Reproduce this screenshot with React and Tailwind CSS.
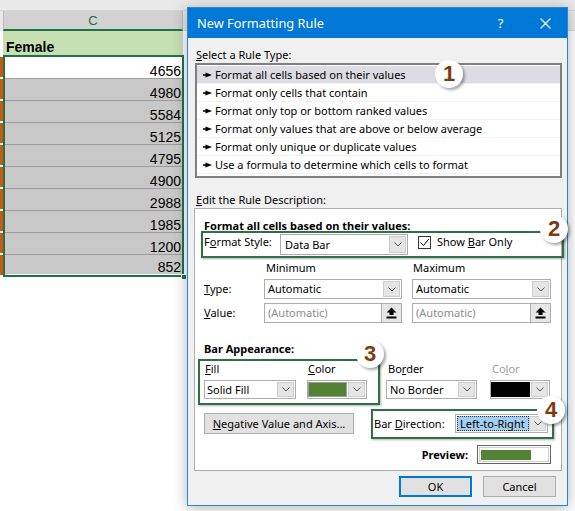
import React from "react";

const Chevron = () => (
  <svg width="8" height="5" viewBox="0 0 8 5">
    <polyline points="0.5,0.5 4,4 7.5,0.5" fill="none" stroke="#555" strokeWidth="1" />
  </svg>
);

const DropBtn = () => (
  <div className="w-[17px] my-[1px] mr-[1px] ml-auto shrink-0 flex items-center justify-center bg-[#e5e5e5] border border-[#cdcdcd]">
    <Chevron />
  </div>
);

function Combo({ cls, text, textCls }) {
  return (
    <div className={"flex items-stretch bg-white border border-[#adadad] " + cls}>
      <div className={"flex items-center leading-[16px] " + textCls}>{text}</div>
      <DropBtn />
    </div>
  );
}

const UpArrow = () => (
  <svg width="11" height="12" viewBox="0 0 11 12">
    <path d="M5.5 0.5 L10.5 5.5 H7.5 V8 H3.5 V5.5 H0.5 Z" fill="#000" />
    <rect x="0.5" y="9.5" width="10" height="2" fill="#000" />
  </svg>
);

function RefInput({ cls }) {
  return (
    <div className={"flex items-stretch bg-white border border-[#adadad] " + cls}>
      <div className="flex items-center pl-[3px] text-[#8c8c8c] leading-[16px]">(Automatic)</div>
      <div className="ml-auto w-[20px] shrink-0 flex items-center justify-center bg-[#e6e6e6] border-l border-[#adadad]">
        <UpArrow />
      </div>
    </div>
  );
}

const ListArrow = () => (
  <svg width="9" height="6" viewBox="0 0 9 6" className="shrink-0">
    <path d="M0 2.3 H2.5 V0.5 L9 3 L2.5 5.5 V3.7 H0 Z" fill="#000" />
  </svg>
);

const ruleTypes = [
  "Format all cells based on their values",
  "Format only cells that contain",
  "Format only top or bottom ranked values",
  "Format only values that are above or below average",
  "Format only unique or duplicate values",
  "Use a formula to determine which cells to format",
];

const values = ["4656", "4980", "5584", "5125", "4795", "4900", "2988", "1985", "1200", "852"];

function Badge({ cls, n }) {
  return (
    <div
      className={
        "absolute w-[28px] h-[28px] rounded-full bg-white flex items-center justify-center shadow-[2px_2px_3px_rgba(0,0,0,0.35)] font-['Liberation_Sans',Arial,sans-serif] font-bold text-[22px] leading-none text-[#7f3b0e] " +
        cls
      }
    >
      {n}
    </div>
  );
}

function Sheet() {
  return (
    <div className="flex flex-col font-['Liberation_Sans',Arial,sans-serif] text-[14px] text-black">
      <div className="h-[11px] bg-[#e9e9e9] border-b border-[#d6d6d6]" />
      <div className="flex h-[20px]">
        <div className="w-[3px] bg-[#e9e9e9]" />
        <div className="w-[180px] bg-[#d2d2d2] border-l border-r border-[#bdbdbd] border-b-2 border-b-[#217346] flex items-center justify-center text-[13px] text-[#2a6a44] leading-none">
          C
        </div>
        <div className="flex-1 bg-[#e9e9e9] border-b border-[#d6d6d6]" />
      </div>
      <div className="flex h-[24px]">
        <div className="w-[3px] bg-white" />
        <div className="w-[180px] bg-[#c6e0b4] border-r border-[#d4d4d4] flex items-end pl-[3px] pb-[1px] font-bold leading-[14px]">
          Female
        </div>
      </div>
      <div className="flex">
        <div className="w-[3px] flex flex-col pt-[2px]">
          {values.map((v, i) => (
            <div key={i} className="h-[22px] pb-[2px]">
              <div className="h-full bg-[#c55a11]" />
            </div>
          ))}
        </div>
        <div className="relative w-[181px] border-2 border-[#217346]">
          <div className="flex flex-col border-b border-white">
            {values.map((v, i) => (
              <div
                key={i}
                className={
                  "flex items-end justify-end pr-[1px] leading-[14px] " +
                  (i === 0 ? "bg-white " : "bg-[#c8c8c8] ") +
                  (i === values.length - 1 ? "h-[19px]" : "h-[22px] border-b border-[#9b9b9b]")
                }
              >
                {v}
              </div>
            ))}
          </div>
          <div className="absolute right-[-5px] bottom-[-5px] w-[6px] h-[6px] bg-[#217346] border border-white" />
        </div>
      </div>
    </div>
  );
}

function Dialog() {
  return (
    <div className="absolute left-[187px] top-[7px] w-[381px] h-[499px] border border-[#2b85d6] bg-[#f0f0f0] flex flex-col shadow-[0_2px_14px_rgba(0,0,0,0.3)] font-['Noto_Sans',sans-serif] text-[11px] text-black">
      <div className="h-[30px] shrink-0 bg-[#0078d7] flex items-center text-white">
        <div className="pl-[9px] text-[12.8px] leading-[16px]">New Formatting Rule</div>
        <div className="ml-auto w-[45px] flex justify-center text-[13px] leading-[16px]">?</div>
        <div className="w-[44px] flex justify-center">
          <svg width="11" height="11" viewBox="0 0 11 11">
            <path d="M0.5 0.5 L10.5 10.5 M10.5 0.5 L0.5 10.5" stroke="#fff" strokeWidth="1.1" />
          </svg>
        </div>
      </div>
      <div className="pl-[7px] pt-[9px] flex flex-col">
        <div className="pl-[1px] h-[16px] leading-[16px]">
          <span className="underline">S</span>elect a Rule Type:
        </div>
        <div className="w-[367px] h-[115px] border-2 border-[#7f7f7f] bg-white pt-[1px] flex flex-col">
          {ruleTypes.map((t, i) => (
            <div
              key={i}
              className={
                "h-[18px] shrink-0 flex items-center gap-[3px] pl-[6px] leading-[16px] border-b border-[#f2f2f2] " +
                (i === 0 ? "bg-[#dcdce2]" : "")
              }
            >
              <ListArrow />
              <span className="pt-[1px]">{t}</span>
            </div>
          ))}
        </div>
        <div className="mt-[14px] pl-[1px] h-[16px] leading-[16px]">
          <span className="underline">E</span>dit the Rule Description:
        </div>
        <div className="ml-[-1px] w-[368px] h-[263px] border border-[#adadad] bg-white pl-[9px] pt-[9px] flex flex-col">
          <div className="h-[16px] leading-[16px] font-bold">Format all cells based on their values:</div>
          <div className="flex items-start h-[21px]">
            <div className="w-[76px] leading-[16px]">
              F<span className="underline">o</span>rmat Style:
            </div>
            <Combo cls="w-[128px] h-[21px]" text="Data Bar" textCls="pl-[4px]" />
            <div className="ml-[10px] mt-[2px] w-[13px] h-[13px] border border-[#333] bg-white flex items-center justify-center">
              <svg width="11" height="11" viewBox="0 0 11 11">
                <path d="M1.5 5.5 L4.5 8.5 L9.8 2" fill="none" stroke="#000" strokeWidth="1" />
              </svg>
            </div>
            <div className="ml-[6px] leading-[16px]">
              Show <span className="underline">B</span>ar Only
            </div>
          </div>
          <div className="flex mt-[5px] h-[16px] leading-[16px]">
            <div className="w-[209px] pl-[62px]">Minimum</div>
            <div>Maximum</div>
          </div>
          <div className="flex items-center mt-[3px] h-[20px]">
            <div className="w-[60px] leading-[16px]">
              <span className="underline">T</span>ype:
            </div>
            <Combo cls="w-[138px] h-[20px]" text="Automatic" textCls="pl-[3px]" />
            <Combo cls="ml-[10px] w-[139px] h-[20px]" text="Automatic" textCls="pl-[3px]" />
          </div>
          <div className="flex items-center mt-[4px] h-[20px]">
            <div className="w-[60px] leading-[16px]">
              <span className="underline">V</span>alue:
            </div>
            <RefInput cls="w-[138px] h-[20px]" />
            <RefInput cls="ml-[10px] w-[139px] h-[20px]" />
          </div>
          <div className="mt-[18px] h-[16px] leading-[16px] font-bold">Bar Appearance:</div>
          <div className="flex mt-[4px]">
            <div className="w-[92px] flex flex-col">
              <div className="pl-[1px] h-[16px] leading-[16px]">
                <span className="underline">F</span>ill
              </div>
              <Combo cls="mt-[3px] w-[92px] h-[19px]" text="Solid Fill" textCls="pl-[2px]" />
            </div>
            <div className="ml-[11px] w-[60px] flex flex-col">
              <div className="pl-[1px] h-[16px] leading-[16px]">
                <span className="underline">C</span>olor
              </div>
              <div className="mt-[3px] w-[60px] h-[19px] flex items-stretch bg-white border border-[#adadad]">
                <div className="w-[39px] my-[1px] bg-[#548235] border border-[#9a9a9a]" />
                <DropBtn />
              </div>
            </div>
            <div className="ml-[19px] w-[91px] flex flex-col">
              <div className="pl-[2px] h-[16px] leading-[16px]">
                Bo<span className="underline">r</span>der
              </div>
              <Combo cls="mt-[3px] w-[91px] h-[19px]" text="No Border" textCls="pl-[3px]" />
            </div>
            <div className="ml-[13px] w-[60px] flex flex-col">
              <div className="pl-[2px] h-[16px] leading-[16px] text-[#a0a0a0]">
                Co<span className="underline">l</span>or
              </div>
              <div className="mt-[3px] w-[60px] h-[19px] flex items-stretch bg-white border border-[#adadad]">
                <div className="w-[39px] my-[1px] bg-black" />
                <DropBtn />
              </div>
            </div>
          </div>
          <div className="flex items-center mt-[14px] h-[21px]">
            <div className="w-[150px] h-[21px] bg-[#e1e1e1] border border-[#adadad] flex items-center justify-center leading-[16px]">
              <span>
                <span className="underline">N</span>egative Value and Axis...
              </span>
            </div>
            <div className="ml-[20px] w-[81px] leading-[16px]">
              Bar <span className="underline">D</span>irection:
            </div>
            <div className="w-[93px] h-[19px] flex items-stretch bg-white border border-[#adadad]">
              <div className="ml-[1px] my-[1px] w-[75px] bg-[#a3cff3] border border-dotted border-[#333] flex items-center pl-[2px] leading-[16px]">
                Left-to-Right
              </div>
              <DropBtn />
            </div>
          </div>
          <div className="flex items-center justify-end mt-[11px] pr-[10px] h-[19px]">
            <div className="font-bold leading-[16px]">Preview:</div>
            <div className="ml-[9px] w-[74px] h-[19px] border border-[#646464] bg-white p-[1px]">
              <div className="w-full h-full border border-[#d0d0d0] flex items-center pl-[1px]">
                <div className="w-[50px] h-[10px] bg-[#548235]" />
              </div>
            </div>
          </div>
        </div>
        <div className="w-[367px] flex justify-end gap-[11px] pr-[6px] mt-[5px]">
          <div className="w-[73px] h-[21px] bg-[#e1e1e1] border-2 border-[#0078d7] flex items-center justify-center leading-[16px]">
            OK
          </div>
          <div className="w-[73px] h-[21px] bg-[#e1e1e1] border border-[#adadad] flex items-center justify-center leading-[16px]">
            Cancel
          </div>
        </div>
      </div>
    </div>
  );
}

export default function App() {
  return (
    <div className="relative w-[575px] h-[511px] overflow-hidden bg-white">
      <Sheet />
      <Dialog />
      <div className="absolute left-[201px] top-[231px] w-[363px] h-[27px] border-2 border-[#2f6f45] shadow-[1px_1px_2px_rgba(0,0,0,0.3)]" />
      <div className="absolute left-[198px] top-[359px] w-[182px] h-[46px] border-2 border-[#2f6f45] shadow-[1px_1px_2px_rgba(0,0,0,0.3)]" />
      <div className="absolute left-[371px] top-[409px] w-[183px] h-[30px] border-2 border-[#2f6f45] shadow-[1px_1px_2px_rgba(0,0,0,0.3)]" />
      <Badge cls="left-[435px] top-[60px]" n="1" />
      <Badge cls="left-[540px] top-[215px]" n="2" />
      <Badge cls="left-[356px] top-[340px]" n="3" />
      <Badge cls="left-[537px] top-[396px]" n="4" />
    </div>
  );
}
